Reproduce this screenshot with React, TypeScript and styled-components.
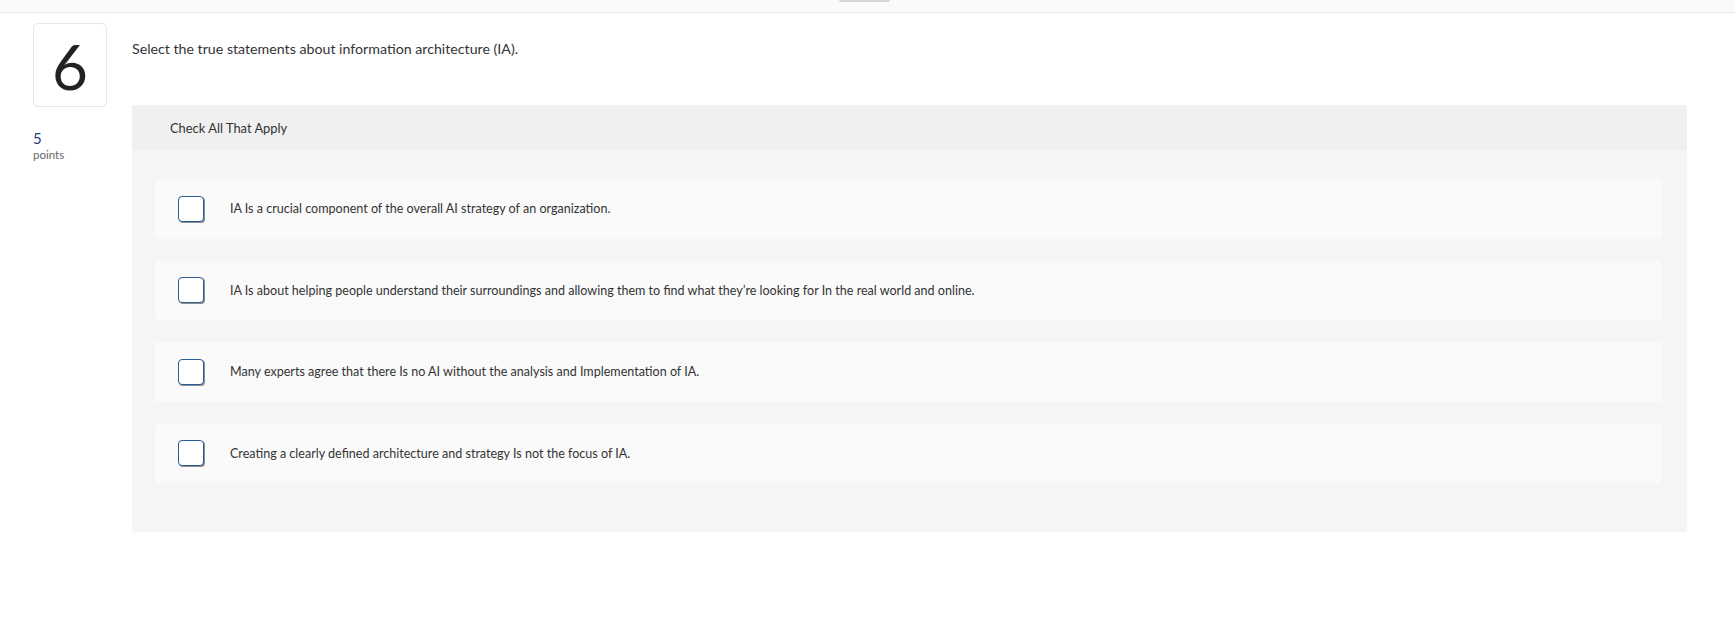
import React from "react";
import styled, { createGlobalStyle } from "styled-components";

const GlobalStyle = createGlobalStyle`
  html, body { margin: 0; padding: 0; background: #ffffff; }
  body { font-family: "Lato", "Open Sans", sans-serif; color: #333; }
  * { box-sizing: border-box; }
`;

const TopBar = styled.div`
  height: 13px;
  background: #fafafa;
  border-bottom: 1px solid #e8e8e8;
  display: flex;
  justify-content: center;
`;

const TopTab = styled.div`
  width: 51px;
  height: 2px;
  margin-left: -6px;
  background: #d6d6d6;
  border-radius: 0 0 3px 3px;
`;

const Main = styled.main`
  display: grid;
  grid-template-columns: 74px 1fr;
  column-gap: 25px;
  padding: 10px 48px 0 33px;
`;

const Side = styled.aside`
  display: flex;
  flex-direction: column;
`;

const NumberBox = styled.div`
  width: 74px;
  height: 84px;
  border: 1px solid #e6e6e6;
  border-radius: 5px;
  display: flex;
  align-items: center;
  justify-content: center;
  font-size: 62px;
  font-weight: 400;
  color: #222;
  line-height: 1;
  padding-top: 2px;
`;

const Points = styled.div`
  margin-top: 23px;
  display: flex;
  flex-direction: column;
`;

const PointsValue = styled.span`
  font-size: 15px;
  line-height: 17px;
  color: #1d3f7a;
`;

const PointsLabel = styled.span`
  font-size: 11.5px;
  line-height: 15px;
  color: #666;
`;

const Content = styled.section`
  display: flex;
  flex-direction: column;
`;

const Prompt = styled.p`
  margin: 0;
  padding-top: 16px;
  font-size: 14.2px;
  line-height: 20px;
  color: #333;
  height: 82px;
`;

const Panel = styled.div`
  background: #f5f5f5;
  border-radius: 3px;
  overflow: hidden;
`;

const PanelHeader = styled.div`
  height: 45px;
  background: #f0f0f0;
  display: flex;
  align-items: center;
  padding-left: 38px;
  font-size: 12.9px;
  color: #333;
`;

const OptionList = styled.div`
  display: flex;
  flex-direction: column;
  gap: 22px;
  padding: 29px 25px 49px 23px;
`;

const Option = styled.label`
  height: 59.5px;
  background: #fafafa;
  border-radius: 4px;
  display: flex;
  align-items: center;
  padding-left: 23px;
  gap: 26px;
  font-size: 12.55px;
  color: #333;
`;

const Box = styled.span`
  flex: none;
  width: 26px;
  height: 26px;
  background: #fff;
  border: 1.5px solid #2a5b93;
  border-radius: 4px;
  box-shadow: 1px 1px 0 0 #8c8c8c;
`;

const options = [
  "IA Is a crucial component of the overall AI strategy of an organization.",
  "IA Is about helping people understand their surroundings and allowing them to find what they\u2019re looking for In the real world and online.",
  "Many experts agree that there Is no AI without the analysis and Implementation of IA.",
  "Creating a clearly defined architecture and strategy Is not the focus of IA.",
];

export default function App() {
  return (
    <>
      <GlobalStyle />
      <TopBar>
        <TopTab />
      </TopBar>
      <Main>
        <Side>
          <NumberBox>6</NumberBox>
          <Points>
            <PointsValue>5</PointsValue>
            <PointsLabel>points</PointsLabel>
          </Points>
        </Side>
        <Content>
          <Prompt>Select the true statements about information architecture (IA).</Prompt>
          <Panel>
            <PanelHeader>Check All That Apply</PanelHeader>
            <OptionList>
              {options.map((o) => (
                <Option key={o}>
                  <Box />
                  <span>{o}</span>
                </Option>
              ))}
            </OptionList>
          </Panel>
        </Content>
      </Main>
    </>
  );
}
